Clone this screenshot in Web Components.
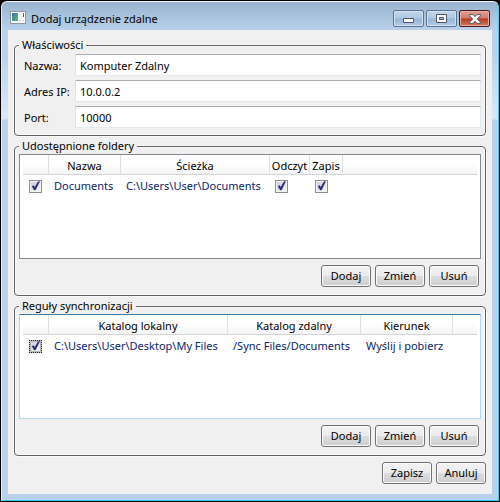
<!DOCTYPE html>
<html lang="pl">
<head>
<meta charset="utf-8">
<title>Dodaj urządzenie zdalne</title>
<style>
  html, body { margin: 0; background: #000; }
  body {
    min-height: 100vh;
    display: flex;
    font: 11px/16px "Noto Sans", "Open Sans", sans-serif;
    color: #000;
  }
</style>
</head>
<body>
<remote-device-dialog></remote-device-dialog>

<template id="t-window">
  <style>
    :host {
      flex: 1;
      min-width: 0;
      display: flex;
      flex-direction: column;
      box-sizing: border-box;
      margin: 1px;
      padding: 0 6px 6px;
      border: 1px solid #2fd2f0;
      border-left-color: #e3eefa;
      border-top-color: #f4f8fc;
      border-radius: 6px 6px 0 0;
      background:
        linear-gradient(#99b4d1, #b9d1ea 28px, #b9d1ea 50px, #dbe9f7 116px, #b9d1ea 119px);
    }
    header { display: flex; align-items: center; height: 28px; }
    .icon { flex: none; margin: 2px 5px 0 2px; }
    h1 { flex: 1; margin: 5px 0 0; font: inherit; white-space: nowrap; }
    nav { display: flex; gap: 2px; align-self: flex-start; margin: 8px 2px 0 0; }
    main { flex: 1; display: flex; flex-direction: column; background: #f0f0f0; }
  </style>
  <header>
    <svg class="icon" width="16" height="13" viewBox="0 0 16 13">
      <defs><linearGradient id="g" x2="1" y2="1"><stop offset="0" stop-color="#3c6fa0"/><stop offset="1" stop-color="#5cc070"/></linearGradient></defs>
      <path d="M0 0h16v13H0z" fill="#8d99a5"/><path d="M1 1h14v11H1z" fill="#fff"/>
      <path d="M2 2h6v8H2z" fill="url(#g)"/>
      <path d="M13 2h1v4h-1z" fill="#3b5f98"/><path d="M9 9h2v1H9zM12 9h2v1h-2z" fill="#c9ced4"/>
    </svg>
    <h1></h1>
    <nav>
      <caption-button kind="min" label="Minimalizuj"></caption-button>
      <caption-button kind="max" label="Maksymalizuj"></caption-button>
      <caption-button kind="close" label="Zamknij"></caption-button>
    </nav>
  </header>
  <main><slot></slot></main>
</template>

<template id="t-caption">
  <style>
    :host { display: block; }
    button {
      display: flex; align-items: center; justify-content: center;
      box-sizing: border-box; width: 31px; height: 17px; margin: 0; padding: 0;
      border: 1px solid #5f7390; border-radius: 2px;
      background: linear-gradient(#c0d4e9, #b0c8e2 7px, #98b5d4 8px, #b2cbe5);
      box-shadow: inset 0 0 0 1px #d3e1f0;
    }
    :host([kind="close"]) button {
      border-color: #4a1420;
      background: linear-gradient(#e0a296, #d07b6c 7px, #b83a24 8px, #d07a58);
      box-shadow: inset 0 0 0 1px #e6b0a4;
    }
    svg { display: none; }
    :host([kind="min"]) .min, :host([kind="max"]) .max, :host([kind="close"]) .close { display: block; }
  </style>
  <button type="button">
    <svg class="min" width="11" height="9" viewBox="0 0 11 9"><path d="M.5 4.500h10v4H.5z" fill="#fff" stroke="#535666"/></svg>
    <svg class="max" width="11" height="9" viewBox="0 0 11 9"><path d="M.5.5h10v8H.5z" fill="#fff" stroke="#535666"/><path d="M3.500 3.500h4v2h-4z" fill="#9dbbd9" stroke="#535666"/></svg>
    <svg class="close" width="12" height="10" viewBox="0 0 12 10"><path d="M.6.6H4L6 2.700 8 .6h3.400v1.200L8.300 5l3.100 3.200v1.200H8L6 7.300 4 9.400H.6V8.200L3.700 5 .6 1.800z" fill="#fff" stroke="#535666"/></svg>
  </button>
</template>

<template id="t-group">
  <style>
    :host { display: flex; flex-direction: column; }
    fieldset {
      flex: 1; min-width: 0; margin: 0; padding: 0 4px 7px;
      border: 1px solid #606060; border-radius: 4px;
      box-shadow: 0 0 0 1px #fbfbfb, inset 0 0 0 1px #fbfbfb;
    }
    legend { padding: 0 3px; background: #f0f0f0; }
    .body { display: flex; flex-direction: column; height: 100%; box-sizing: border-box; }
  </style>
  <fieldset>
    <legend></legend>
    <div class="body"><slot></slot></div>
  </fieldset>
</template>

<template id="t-field">
  <style>
    :host { display: grid; grid-template-columns: 51px 1fr; align-items: center; padding-left: 5px; }
    label { white-space: nowrap; padding-top: 2px; }
    input {
      box-sizing: border-box; width: 100%; min-width: 0; height: 22px; margin: 0; padding: 1px 4px 0;
      border: 1px solid #e3e9ef; border-top-color: #abadb3; border-left-color: #e2e3ea;
      border-radius: 1px; background: #fff; font: inherit; color: #000;
    }
  </style>
  <label for="i"></label><input id="i" type="text">
</template>

<template id="t-button">
  <style>
    :host { display: block; }
    button {
      box-sizing: border-box; min-width: 50px; height: 22px; margin: 0; padding: 0 4px;
      border: 1px solid #707070; border-radius: 3px;
      background: linear-gradient(#f3f3f3, #ebebeb 50%, #dddddd 50%, #cdcdcd);
      box-shadow: inset 0 0 0 1px #fbfbfb;
      font: inherit; line-height: 18px; color: #000;
    }
  </style>
  <button type="button"><slot></slot></button>
</template>

<template id="t-check">
  <style>
    :host { display: block; height: 13px; width: 13px; }
    input {
      appearance: none; display: block; box-sizing: border-box; width: 13px; height: 13px; margin: 0;
      border: 1px solid #8e8f8f;
      background: linear-gradient(135deg, #cbcfd5, #f6f6f6) content-box, #f4f4f4;
      padding: 1px;
    }
    :host([focused]) input { border: 1px dotted #222; outline: 0; background: linear-gradient(135deg, #cbcfd5, #f6f6f6) content-box, #b8b8b8; }
    .box { position: relative; }
    svg { position: absolute; left: 2px; top: 1px; display: none; pointer-events: none; }
    input:checked + svg { display: block; }
  </style>
  <div class="box">
    <input type="checkbox">
    <svg width="9" height="10" viewBox="0 0 9 10"><path d="M1 5.200 2.700 4.600 3.700 6.500 7 .8 8.600.5 4.400 9H3.200z" fill="#26267c" stroke="#26267c" stroke-width=".4"/></svg>
  </div>
</template>

<template id="t-list">
  <style>
    :host {
      flex: 1; display: block; box-sizing: border-box; min-height: 104px; padding: 0 3px 3px;
      border: 1px solid #828790; background: #fff;
    }
    :host([focused]) { border-color: #b5d7ed; border-top-color: #3d7bad; }
    table { width: 100%; table-layout: fixed; border-collapse: separate; border-spacing: 0; }
    th {
      box-sizing: border-box; height: 20px; padding: 2px 0 0; font-weight: normal; white-space: nowrap;
      background: linear-gradient(#fff 40%, #f4f5f6);
      border-right: 1px solid #dfe0e2; border-bottom: 1px solid #d5d5d5;
    }
    th:last-child { border-right: 0; }
    td { height: 22px; padding: 0 5px; color: #0b246b; white-space: nowrap; }
    td:first-child { padding: 0 6px; }
  </style>
  <table>
    <colgroup></colgroup>
    <thead><tr></tr></thead>
    <tbody><tr></tr></tbody>
  </table>
</template>

<template id="t-dialog">
  <style>
    :host { flex: 1; min-width: 0; display: flex; }
    .content { flex: 1; display: flex; flex-direction: column; gap: 2px; padding: 7px 6px 10px; }
    .fields { display: grid; gap: 4px; padding-top: 1px; }
    .grow { flex: 1; }
    .actions { display: flex; justify-content: flex-end; gap: 4px; padding: 6px 2px 1px; }
    .footer { display: flex; justify-content: flex-end; gap: 4px; padding-top: 4px; }
  </style>
  <aero-window heading="Dodaj urządzenie zdalne">
    <div class="content">
      <group-box heading="Właściwości">
        <div class="fields">
          <text-field label="Nazwa:" value="Komputer Zdalny"></text-field>
          <text-field label="Adres IP:" value="10.0.0.2"></text-field>
          <text-field label="Port:" value="10000"></text-field>
        </div>
      </group-box>
      <group-box class="grow" heading="Udostępnione foldery">
        <list-view widths="26,72,149,40,33" heads="|Nazwa|Ścieżka|Odczyt|Zapis" cells="✓|Documents|C:\Users\User\Documents|✓|✓"></list-view>
        <div class="actions"><push-button>Dodaj</push-button><push-button>Zmień</push-button><push-button>Usuń</push-button></div>
      </group-box>
      <group-box class="grow" heading="Reguły synchronizacji">
        <list-view focused widths="26,179,133,92" heads="|Katalog lokalny|Katalog zdalny|Kierunek" cells="✓|C:\Users\User\Desktop\My Files|/Sync Files/Documents|Wyślij i pobierz"></list-view>
        <div class="actions"><push-button>Dodaj</push-button><push-button>Zmień</push-button><push-button>Usuń</push-button></div>
      </group-box>
      <div class="footer"><push-button>Zapisz</push-button><push-button>Anuluj</push-button></div>
    </div>
  </aero-window>
</template>

<script>
  class Base extends HTMLElement {
    constructor() {
      super();
      this.attachShadow({ mode: "open" })
        .append(document.getElementById(this.constructor.template).content.cloneNode(true));
    }
    $(sel) { return this.shadowRoot.querySelector(sel); }
  }

  class CaptionButton extends Base {
    static template = "t-caption";
    connectedCallback() { this.$("button").setAttribute("aria-label", this.getAttribute("label")); }
  }
  class PushButton extends Base { static template = "t-button"; }
  class CheckBox extends Base {
    static template = "t-check";
    connectedCallback() {
      this.$("input").checked = this.hasAttribute("checked");
      this.$("input").setAttribute("aria-label", this.getAttribute("label") || "");
    }
  }
  class TextField extends Base {
    static template = "t-field";
    connectedCallback() {
      this.$("label").textContent = this.getAttribute("label");
      this.$("input").value = this.getAttribute("value");
    }
  }
  class GroupBox extends Base {
    static template = "t-group";
    connectedCallback() { this.$("legend").textContent = this.getAttribute("heading"); }
  }
  class AeroWindow extends Base {
    static template = "t-window";
    connectedCallback() { this.$("h1").textContent = this.getAttribute("heading"); }
  }
  class ListView extends Base {
    static template = "t-list";
    connectedCallback() {
      const heads = this.getAttribute("heads").split("|");
      for (const w of this.getAttribute("widths").split(",")) {
        const col = document.createElement("col");
        col.style.width = w + "px";
        this.$("colgroup").append(col);
      }
      this.$("colgroup").append(document.createElement("col"));
      for (const h of [...heads, ""]) {
        const th = document.createElement("th");
        th.textContent = h;
        this.$("thead tr").append(th);
      }
      this.getAttribute("cells").split("|").forEach((c, i) => {
        const td = document.createElement("td");
        if (c === "✓") {
          const box = document.createElement("check-box");
          box.setAttribute("checked", "");
          box.setAttribute("label", heads[i] || "Zaznacz");
          if (this.hasAttribute("focused")) box.setAttribute("focused", "");
          td.append(box);
        } else td.textContent = c;
        this.$("tbody tr").append(td);
      });
      this.$("tbody tr").append(document.createElement("td"));
    }
  }
  class RemoteDeviceDialog extends Base { static template = "t-dialog"; }

  customElements.define("caption-button", CaptionButton);
  customElements.define("push-button", PushButton);
  customElements.define("check-box", CheckBox);
  customElements.define("text-field", TextField);
  customElements.define("group-box", GroupBox);
  customElements.define("aero-window", AeroWindow);
  customElements.define("list-view", ListView);
  customElements.define("remote-device-dialog", RemoteDeviceDialog);
</script>
</body>
</html>
